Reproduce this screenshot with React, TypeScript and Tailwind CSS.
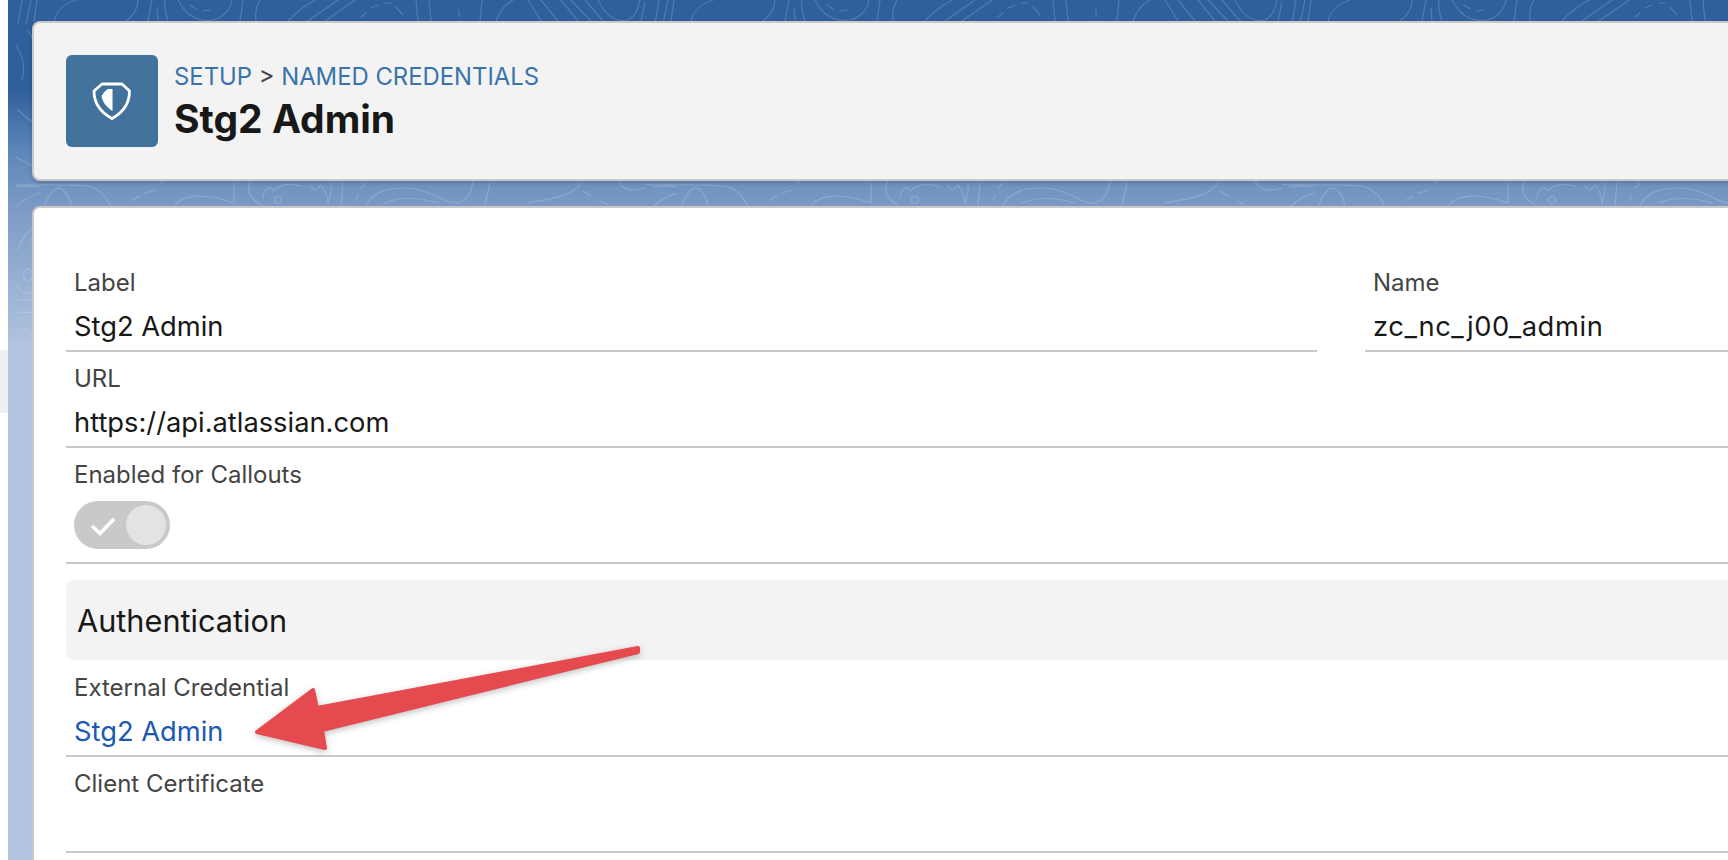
import React from "react";

const font = { fontFamily: "Inter, 'Liberation Sans', sans-serif" };

function Backdrop() {
  return (
    <svg className="absolute inset-0 h-[860px] w-[1728px]" viewBox="0 0 1728 860" fill="none" aria-hidden="true">
      <defs>
        <pattern id="topo" x="0" y="0" width="637" height="860" patternUnits="userSpaceOnUse">
          <g stroke="#ffffff" strokeOpacity="0.17" strokeWidth="1.2" strokeLinecap="round" fill="none">
            <path d="M10 24 L14 0 M18 24 L23 0 M26 22 L29 0 M46 22 C48 10 58 3 68 0 M118 21 C126 15 130 8 130 0 M140 21 L144 0 M150 21 L149 8 M160 21 C157 12 156 6 157 0" />
            <path d="M170 0 C178 16 190 22 205 20 C215 18 222 10 224 0 M182 5 L188 9 M195 11 L202 10 M232 21 L235 0 M248 21 C247 12 249 5 252 0" />
            <path d="M280 21 C290 10 298 5 307 0 M300 21 L330 0 M317 21 L347 0 M353 17 L358 13 M363 8 L370 5 M377 3 L383 3 M388 7 L395 15" />
            <path d="M410 21 L408 0 M423 21 L421 0 M451 17 L451 10 M472 21 L474 0 M488 21 C492 10 497 4 505 0" />
            <path d="M520 0 L533 21 M533 0 L550 21 M553 0 L570 21 M563 0 L583 21 M577 0 L595 21 M590 0 C600 20 612 22 620 20 C628 16 630 8 632 0 M633 21 L637 2" />
            <path d="M8 157 L28 168 M8 187 C15 186 25 186 32 187 M8 207 C15 200 25 195 32 193 M10 250 C15 235 25 225 32 223 M22 240 C27 237 30 236 32 236 M22 244 C27 247 30 247 32 245" />
            <path d="M8 45 C14 55 18 65 14 80 M20 30 L24 38 M10 110 L26 124 M8 285 C16 296 24 294 32 290 M10 300 L32 300 M9 312 L32 313 M14 330 L20 329 M28 328 L32 328" />
            <ellipse cx="20" cy="275" rx="4.5" ry="6" />
            <path d="M-28 183 C0 187 55 183 80 186 C90 188 97 195 102 205" />
            <path d="M37 205 C42 190 50 186 54 189 C59 193 62 200 63 205 M125 200 L131 196 M137 193 L147 190 M152 183 L155 181" />
            <path d="M167 205 C175 195 195 192 226 203 M226 183 L226 203 M243 181 C238 190 241 198 253 205" />
            <path d="M255 198 C256 188 262 185 266 191 C270 186 278 182 293 186 M303 186 C306 191 308 192 313 185 C317 190 320 197 320 203 M323 183 C324 190 322 197 320 204" />
            <circle cx="270" cy="200" r="3.5" />
            <path d="M335 183 L333 205 M348 200 L350 195 M353 188 L358 183 M358 205 C368 190 380 188 400 188 C425 190 435 203 447 203 C458 203 463 195 465 181 M377 203 C390 197 410 197 430 203 M482 183 L477 205" />
            <path d="M520 203 C550 198 565 195 573 183 M575 191 L583 196 M592 201 L600 205 M610 181 C615 190 622 192 637 188" />
          </g>
        </pattern>
      </defs>
      <rect x="8" y="0" width="1720" height="860" fill="url(#topo)" />
    </svg>
  );
}

function ShieldIcon() {
  return (
    <svg className="h-[92px] w-[92px]" viewBox="0 0 92 92" fill="none" aria-hidden="true">
      <path
        d="M36 29 H56 L63.5 36 C63.5 48 58 57 46 63.5 C34 57 28 48 28 36 Z"
        stroke="#ffffff"
        strokeWidth="2.8"
        strokeLinejoin="round"
      />
      <path d="M46.5 34 H42 C39 36 37 38.5 35.5 41 C36.5 47 40 52 46.5 56 Z" fill="#ffffff" />
    </svg>
  );
}

function Field({
  label,
  value,
  valueClass = "text-[#181818]",
  className = "",
}: {
  label: string;
  value?: string;
  valueClass?: string;
  className?: string;
}) {
  return (
    <div className={`h-[96px] border-b-2 border-[#c9c9c9] px-[8px] pt-[13px] ${className}`}>
      <div className="h-7 text-[24px] leading-7 text-[#444444]">{label}</div>
      <div className={`mt-[14px] h-8 text-[27.3px] leading-8 ${valueClass}`}>{value}</div>
    </div>
  );
}

export default function App() {
  return (
    <div className="relative flex h-[860px] w-[1728px] overflow-hidden bg-white" style={font}>
      <div className="w-2 shrink-0 bg-white pt-[350px]">
        <div className="h-[63px] bg-[#edf0f3]" />
      </div>
      <main className="relative min-w-0 flex-1 bg-[linear-gradient(180deg,#2f5f9c_0px,#2f5f9c_90px,#5c86b9_150px,#7b9ac4_206px,#b0c3df_345px,#b0c3df_860px)] pl-[24px] pt-[21px]">
        <Backdrop />
        <div className="relative -mr-16 flex h-[160px] items-start rounded-lg border-2 border-[#c9c9c9] bg-[#f3f3f3] pl-[32px] pt-[32px] shadow-[0_2px_4px_rgba(0,0,0,0.18)]">
          <div className="flex h-[92px] w-[92px] shrink-0 items-center justify-center rounded-md bg-[#41729c]">
            <ShieldIcon />
          </div>
          <div className="ml-[16px]">
            <div className="mt-[8px] text-[23.85px] leading-7 text-[#444444]">
              <span className="text-[#3a73ab]">SETUP</span> &gt; <span className="text-[#3a73ab]">NAMED CREDENTIALS</span>
            </div>
            <h1 className="mt-[6px] text-[39px] font-bold leading-[44px] text-[#181818]">Stg2 Admin</h1>
          </div>
        </div>
        <div className="relative -mr-16 mt-[25px] h-[700px] rounded-lg border-2 border-[#c9c9c9] bg-white pl-[32px] pt-[48px]">
          <div className="grid grid-cols-[1251px_1fr] gap-x-[48px]">
            <Field label="Label" value="Stg2 Admin" />
            <Field label="Name" value="zc_nc_j00_admin" valueClass="text-[#181818] tracking-[0.6px]" />
          </div>
          <Field label="URL" value="https://api.atlassian.com" />
          <div className="h-[116px] border-b-2 border-[#c9c9c9] px-[8px] pt-[13px]">
            <div className="h-7 text-[24px] leading-7 text-[#444444]">Enabled for Callouts</div>
            <div className="relative mt-[12px] h-12 w-24 rounded-full bg-[#c9c9c9]">
              <svg className="absolute left-[16px] top-[13px] h-[24px] w-[26px]" viewBox="0 0 26 24" fill="none" aria-hidden="true">
                <path d="M2 12 L10 19.5 L24 5" stroke="#ffffff" strokeWidth="3.6" />
              </svg>
              <div className="absolute right-[4px] top-[4px] h-10 w-10 rounded-full bg-[#e3e3e3]" />
            </div>
          </div>
          <div className="mt-4 flex h-[80px] items-center rounded-lg bg-[#f3f3f3] pl-[11px] pt-[2px] text-[30.7px] text-[#181818]">
            Authentication
          </div>
          <Field label="External Credential" value="Stg2 Admin" valueClass="text-[#1c5ab0]" className="mt-px" />
          <Field label="Client Certificate" />
        </div>
      </main>
      <svg className="absolute left-0 top-0 h-[860px] w-[1728px] drop-shadow-[0_2px_3px_rgba(0,0,0,0.25)]" viewBox="0 0 1728 860" fill="none" aria-hidden="true">
        <path
          d="M638 648 L317 708 L313 690 L257 732 L325 748 L322 730 L638 652 Z"
          fill="#e54a4f"
          stroke="#e54a4f"
          strokeWidth="4"
          strokeLinejoin="round"
        />
      </svg>
    </div>
  );
}
